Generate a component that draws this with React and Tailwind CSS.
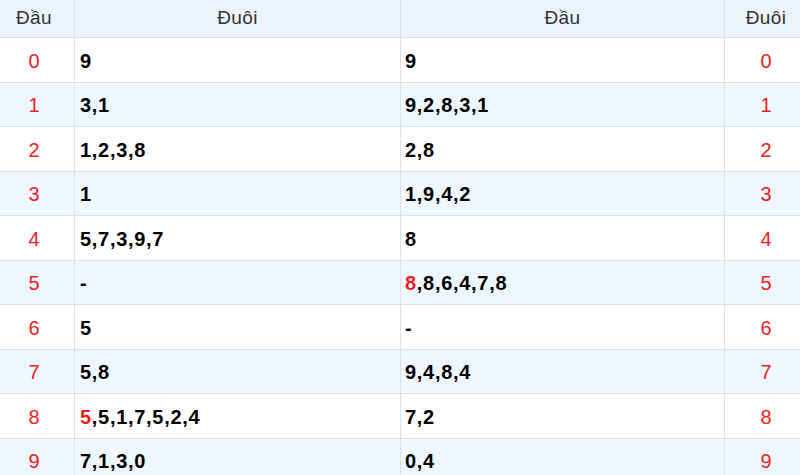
const rows = [
  { d: "0", a: ["9"], b: ["9"] },
  { d: "1", a: ["3,1"], b: ["9,2,8,3,1"] },
  { d: "2", a: ["1,2,3,8"], b: ["2,8"] },
  { d: "3", a: ["1"], b: ["1,9,4,2"] },
  { d: "4", a: ["5,7,3,9,7"], b: ["8"] },
  { d: "5", a: ["-"], b: ["8", ",8,6,4,7,8"], redB: true },
  { d: "6", a: ["5"], b: ["-"] },
  { d: "7", a: ["5,8"], b: ["9,4,8,4"] },
  { d: "8", a: ["5", ",5,1,7,5,2,4"], redA: true, b: ["7,2"] },
  { d: "9", a: ["7,1,3,0"], b: ["0,4"] },
];

function Value({ parts, red }) {
  if (red) {
    return (
      <>
        <span className="text-[#ee1d23]">{parts[0]}</span>
        {parts[1]}
      </>
    );
  }
  return <>{parts[0]}</>;
}

export default function App() {
  return (
    <div
      className="w-[800px] h-[475px] overflow-hidden bg-white"
      style={{ fontFamily: '"Liberation Sans", Arial, sans-serif' }}
    >
      <div className="grid grid-cols-[75px_326px_324px_75px] h-[38px] bg-[#ebf4fd] border-b border-[#dbe1e7] text-[19px] tracking-[0.4px] text-[#333]">
        <div className="flex items-center justify-center pr-[6px] border-r border-[#dbe1e7]">Đầu</div>
        <div className="flex items-center justify-center border-r border-[#dbe1e7]">Đuôi</div>
        <div className="flex items-center justify-center border-r border-[#dbe1e7]">Đầu</div>
        <div className="flex items-center justify-center pl-[7px]">Đuôi</div>
      </div>
      {rows.map((r, i) => (
        <div
          key={r.d}
          className={`grid grid-cols-[75px_326px_324px_75px] h-[44.5px] border-b border-[#dbe1e7] ${
            i % 2 === 1 ? "bg-[#eef6fe]" : "bg-white"
          }`}
        >
          <div className="flex items-center justify-center pr-[6px] pt-[2px] border-r border-[#dbe1e7] text-[20px] text-[#ee1d23]">
            {r.d}
          </div>
          <div className="flex items-center pl-[5px] pt-[2px] border-r border-[#dbe1e7] text-[20px] tracking-[0.7px] font-bold text-black">
            <Value parts={r.a} red={r.redA} />
          </div>
          <div className="flex items-center pl-[4px] pt-[2px] border-r border-[#dbe1e7] text-[20px] tracking-[0.7px] font-bold text-black">
            <Value parts={r.b} red={r.redB} />
          </div>
          <div className="flex items-center justify-center pl-[7px] pt-[2px] text-[20px] text-[#ee1d23]">{r.d}</div>
        </div>
      ))}
    </div>
  );
}
